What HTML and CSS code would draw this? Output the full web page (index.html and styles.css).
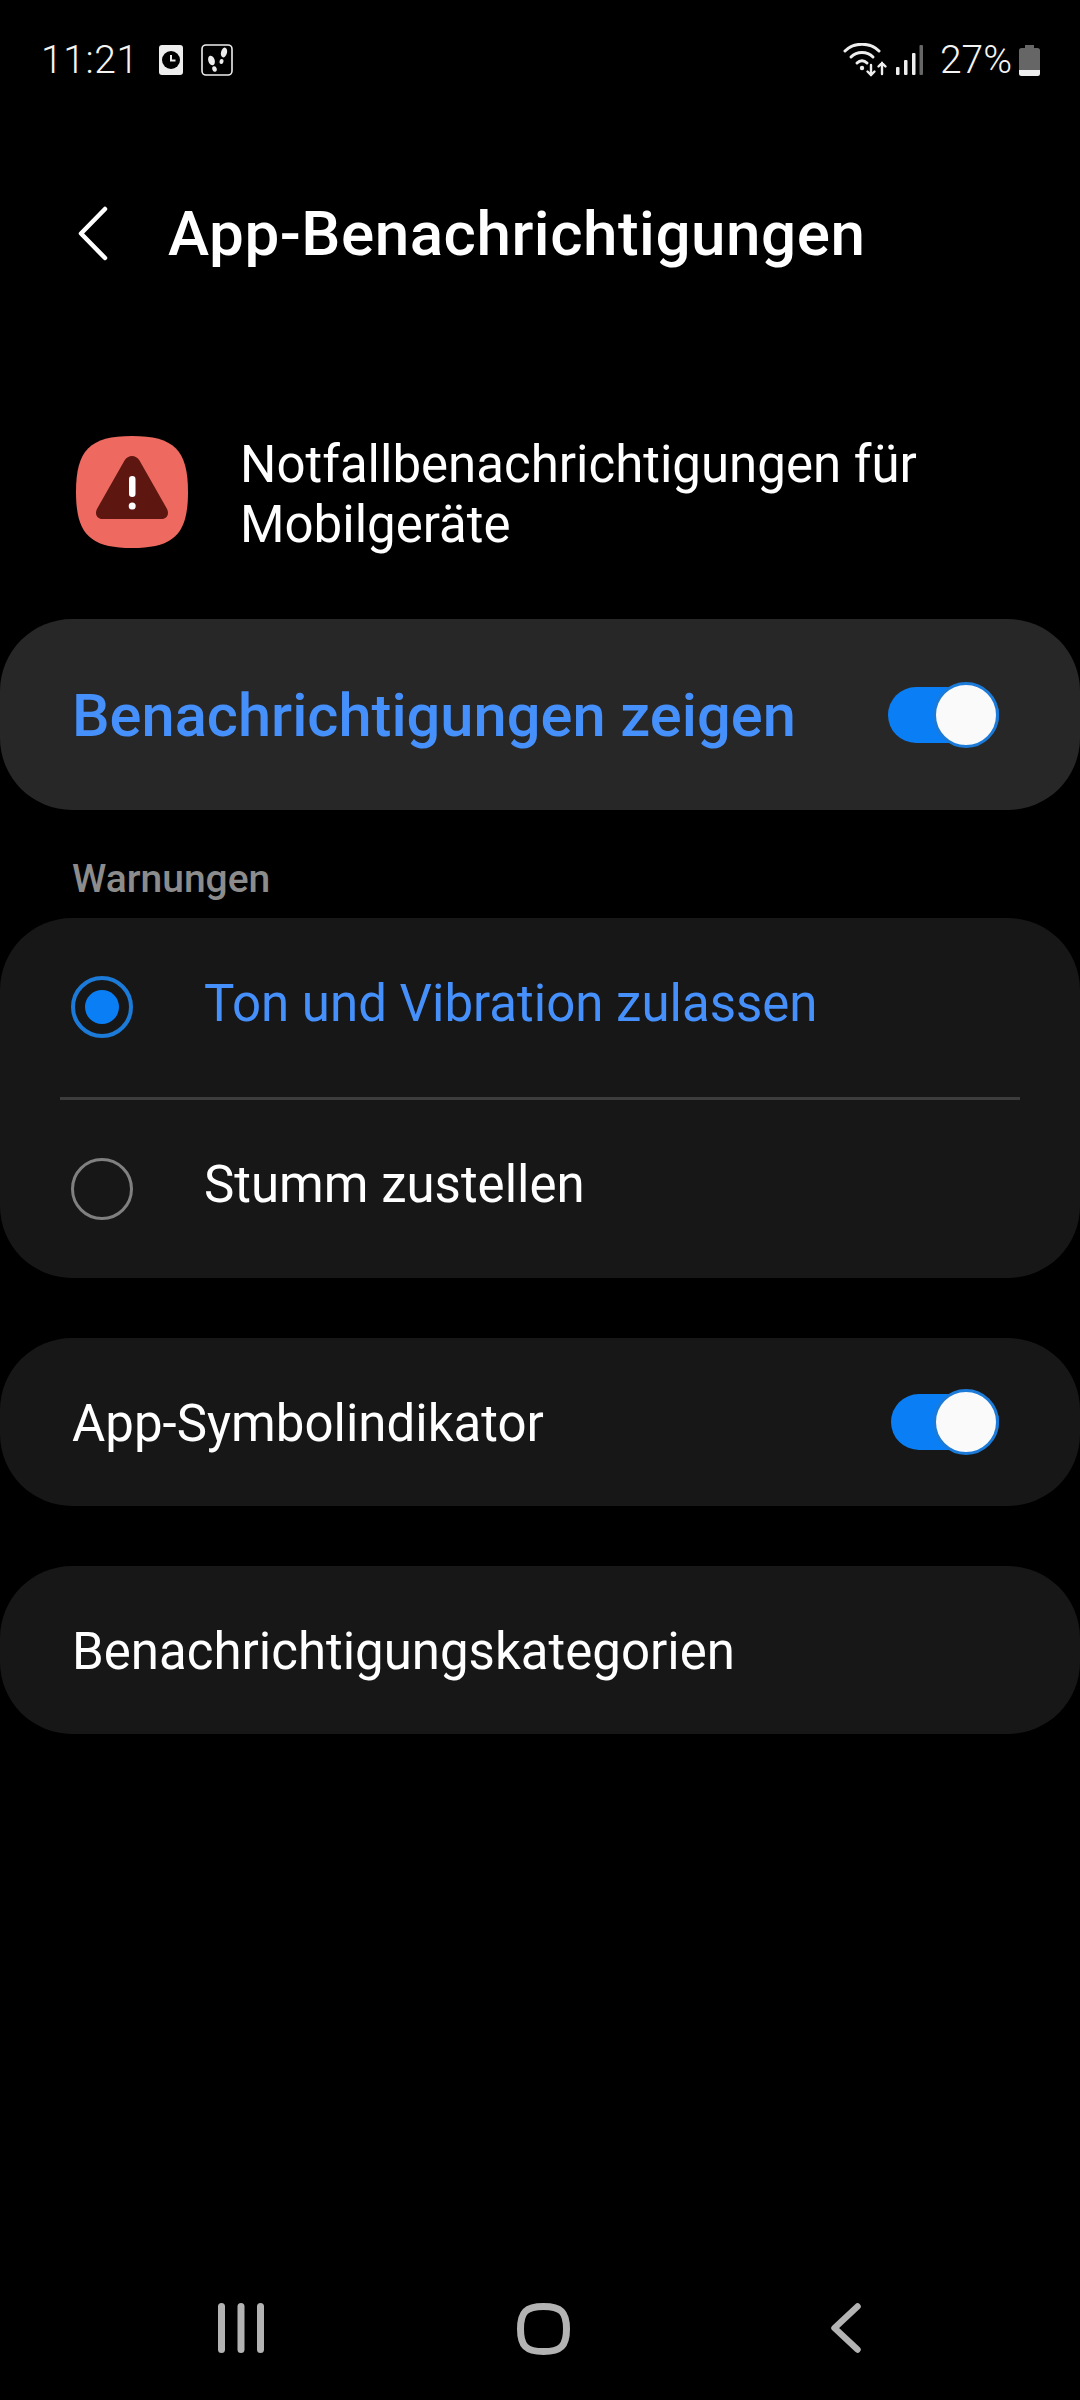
FILE: index.html
```html
<!DOCTYPE html>
<html lang="de">
<head>
  <meta charset="UTF-8" />
  <title>App-Benachrichtigungen</title>
  <link rel="stylesheet" href="styles.css">
</head>
<body>

  <header class="status-bar">
    <span class="status-time">11:21</span>
    <svg class="ic-clock" width="24" height="30" viewBox="0 0 24 30">
      <rect width="24" height="30" rx="3" fill="#eee"/>
      <circle cx="12" cy="15" r="9" fill="#000"/>
      <path d="M12 10v5.500h4.500" stroke="#eee" stroke-width="2" fill="none"/>
    </svg>
    <svg class="ic-steps" width="32" height="32" viewBox="0 0 32 32">
      <rect x="1" y="1" width="30" height="30" rx="4" fill="none" stroke="#eee" stroke-width="1.600"/>
      <ellipse cx="10.500" cy="16.500" rx="3.200" ry="5" transform="rotate(-18 10.500 16.500)" fill="#eee"/>
      <ellipse cx="13.500" cy="25" rx="2.200" ry="2.800" transform="rotate(-18 13.500 25)" fill="#eee"/>
      <ellipse cx="23" cy="8.500" rx="3" ry="5" transform="rotate(15 23 8.500)" fill="#eee"/>
      <ellipse cx="20.500" cy="17.500" rx="2" ry="2.600" transform="rotate(15 20.500 17.500)" fill="#eee"/>
    </svg>
    <span class="status-space"></span>
    <svg class="ic-wifi" width="46" height="34" viewBox="0 0 46 34">
      <g fill="none" stroke="#eee" stroke-width="3" stroke-linecap="round">
        <path d="M2 8C11 -1 27 -1 36 8"/>
        <path d="M8 14C14 8 24 8 30 14"/>
        <path d="M14 20C17 17 21 17 24 20"/>
        <path d="M28 22V32M24.500 28.500L28 32L31.500 28.500" stroke-width="2.400"/>
        <path d="M39 31V20M35.500 23.500L39 20L42.500 23.500" stroke-width="2.400"/>
      </g>
      <circle cx="19" cy="25" r="2.200" fill="#eee"/>
    </svg>
    <svg class="ic-signal" width="27" height="30" viewBox="0 0 27 30">
      <rect x="0" y="22" width="3.500" height="8" rx="1" fill="#eee"/>
      <rect x="8" y="15" width="3.500" height="15" rx="1" fill="#eee"/>
      <rect x="16" y="8" width="3.500" height="22" rx="1" fill="#eee"/>
      <rect x="23.500" y="0" width="3.500" height="30" rx="1" fill="#666"/>
    </svg>
    <span class="status-battery">27%</span>
    <svg class="ic-battery" width="21" height="31" viewBox="0 0 21 31">
      <path d="M6 0h9v3h3.500a2.500 2.500 0 0 1 2.500 2.500V25H0V5.500A2.500 2.500 0 0 1 2.500 3H6z" fill="#666"/>
      <path d="M0 25h21v3.500a2.500 2.500 0 0 1-2.500 2.500h-16A2.500 2.500 0 0 1 0 28.500z" fill="#eee"/>
    </svg>
  </header>

  <div class="app-bar">
    <svg class="back-icon" width="32" height="57" viewBox="0 0 32 57">
      <path d="M28 4L4 28.500L28 53" fill="none" stroke="#fff" stroke-width="4.500" stroke-linecap="round" stroke-linejoin="round"/>
    </svg>
    <h1>App-Benachrichtigungen</h1>
  </div>

  <main>
    <section class="app-info">
      <svg class="app-icon" width="112" height="112" viewBox="0 0 112 112">
        <path d="M56 0C98 0 112 14 112 56S98 112 56 112S0 98 0 56S14 0 56 0z" fill="#ee6a60"/>
        <path d="M48.500 24.500C52 18.500 60 18.500 63.500 24.500L90.500 72C94 78 91 83 85 83H27C21 83 18 78 21.500 72z" fill="#5e1710"/>
        <rect x="53" y="40" width="6.500" height="21" rx="3.200" fill="#fff"/>
        <circle cx="56.200" cy="70" r="3.500" fill="#fff"/>
      </svg>
      <p>Notfallbenachrichtigungen für<br>Mobilgeräte</p>
    </section>

    <div class="card card-master">
      <span class="master-label">Benachrichtigungen zeigen</span>
      <span class="switch"></span>
    </div>

    <h2 class="group-label">Warnungen</h2>

    <div class="card card-list">
      <div class="radio-row">
        <span class="radio radio-on"></span>
        <span class="radio-text radio-text-on">Ton und Vibration zulassen</span>
      </div>
      <div class="divider"></div>
      <div class="radio-row">
        <span class="radio"></span>
        <span class="radio-text">Stumm zustellen</span>
      </div>
    </div>

    <div class="card card-row">
      <span class="row-text">App-Symbolindikator</span>
      <span class="switch switch-small"></span>
    </div>

    <div class="card card-row">
      <span class="row-text">Benachrichtigungskategorien</span>
    </div>
  </main>

  <nav class="nav-bar">
    <svg width="46" height="50" viewBox="0 0 46 50">
      <path d="M3.500 3.500v43M23 3.500v43M42.500 3.500v43" stroke="#b3b3b3" stroke-width="7" stroke-linecap="round"/>
    </svg>
    <svg class="nav-home" width="53" height="52" viewBox="0 0 53 52">
      <path d="M26.500 3.500C44 3.500 49.500 9 49.500 26S44 48.500 26.500 48.500S3.500 43 3.500 26S9 3.500 26.500 3.500z" fill="none" stroke="#b3b3b3" stroke-width="7"/>
    </svg>
    <svg class="nav-back" width="30" height="50" viewBox="0 0 30 50">
      <path d="M26.500 3.500L3.500 25L26.500 46.500" fill="none" stroke="#b3b3b3" stroke-width="6.500" stroke-linecap="round" stroke-linejoin="round"/>
    </svg>
  </nav>

</body>
</html>
```

FILE: styles.css
```css
body {
  font-family: Roboto, "Noto Sans", sans-serif;
  margin: 0;
  padding: 0;
  background: #000;
  color: #fff;
  width: 1080px;
  height: 2400px;
  display: flex;
  flex-direction: column;
  overflow: hidden;
}

.status-bar {
  height: 120px;
  box-sizing: border-box;
  padding: 0 40px 0 41px;
  display: flex;
  align-items: center;
  color: #f4f4f4;
  font-size: 39px;
}

.status-time {
  width: 118px;
  font-weight: 300;
  letter-spacing: 0.6px;
}

.ic-steps {
  margin-left: 18px;
}

.status-space {
  flex: 1;
}

.ic-signal {
  margin-left: 7px;
}

.status-battery {
  margin-left: 17px;
  font-weight: 300;
}

.ic-battery {
  margin-left: 7px;
}

.app-bar {
  height: 226px;
  display: flex;
  align-items: center;
  padding-left: 77px;
}

.app-bar h1 {
  margin: 0 0 0 59px;
  font-size: 62px;
  font-weight: 500;
  letter-spacing: 0.5px;
}

.app-info {
  margin-top: 90px;
  padding-left: 76px;
  display: flex;
  align-items: center;
  gap: 52px;
  height: 111px;
}

.app-info p {
  margin: 0;
  padding-top: 7px;
  font-size: 51px;
  line-height: 60px;
}

.card {
  background: #171717;
  border-radius: 72px;
  font-size: 51px;
}

.card-master {
  margin-top: 72px;
  height: 191px;
  background: #272727;
  display: flex;
  align-items: center;
  justify-content: space-between;
  padding: 0 81px 0 72px;
}

.master-label {
  padding-top: 2px;
  font-size: 59.600px;
  font-weight: 500;
  color: #4690fb;
}

.switch {
  display: block;
  position: relative;
  width: 111px;
  height: 56px;
  border-radius: 28px;
  background: #0a7ff5;
}

.switch::after {
  content: "";
  position: absolute;
  right: 0;
  top: -5px;
  width: 60px;
  height: 60px;
  border: 3px solid #1c7ad8;
  border-radius: 50%;
  background: #fafafa;
}

.switch-small {
  width: 108px;
}

.group-label {
  margin: 48px 0 18px 72px;
  height: 42px;
  line-height: 42px;
  font-size: 39px;
  font-weight: 500;
  color: #8c8c8c;
}

.card-list {
  height: 360px;
  display: flex;
  flex-direction: column;
}

.radio-row {
  flex: 1;
  display: flex;
  align-items: center;
  padding-left: 71px;
  gap: 71px;
}

.radio {
  box-sizing: border-box;
  width: 62px;
  height: 62px;
  border: 3.500px solid #808080;
  border-radius: 50%;
  display: flex;
  align-items: center;
  justify-content: center;
}

.radio-on {
  border: 4px solid #1c7ad8;
}

.radio-on::after {
  content: "";
  width: 34px;
  height: 34px;
  border-radius: 50%;
  background: #0a7ff5;
}

.radio-text {
  padding-bottom: 8px;
}

.radio-text-on {
  color: #4690fb;
}

.divider {
  height: 3px;
  margin: 0 60px;
  background: #3d3d3d;
}

.card-row {
  margin-top: 60px;
  height: 168px;
  display: flex;
  align-items: center;
  justify-content: space-between;
  padding: 0 81px 0 72px;
}

.row-text {
  padding-top: 2px;
}

.nav-bar {
  margin-top: auto;
  height: 97px;
  display: flex;
  align-items: flex-start;
  padding-left: 218px;
}

.nav-home {
  margin-left: 253px;
}

.nav-back {
  margin-left: 261px;
}
```
